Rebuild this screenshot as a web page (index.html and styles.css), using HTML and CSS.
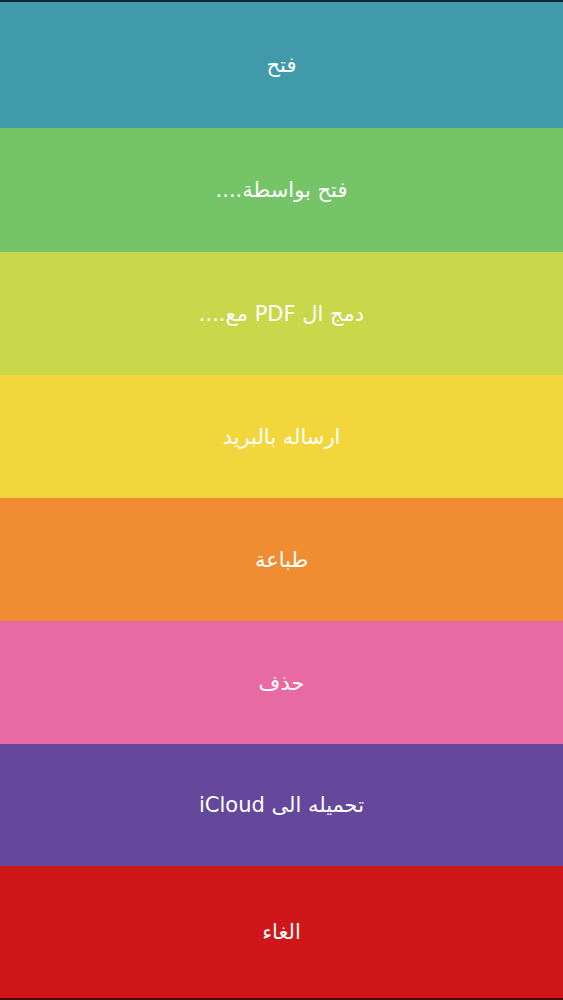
FILE: index.html
```html
<!doctype html>
<html lang="ar" dir="rtl">
    <head>
        <meta charset="UTF-8" />
        <meta name="viewport" content="width=device-width, initial-scale=1.0" />
        <title>خيارات الملف</title>
        <link rel="stylesheet" href="styles.css">
    </head>
    <body>
        <div class="menu">
            <div class="item open">فتح</div>
            <div class="item open-with">فتح بواسطة....</div>
            <div class="item merge">دمج ال PDF مع....</div>
            <div class="item mail">ارساله بالبريد</div>
            <div class="item print">طباعة</div>
            <div class="item delete">حذف</div>
            <div class="item icloud">تحميله الى iCloud</div>
            <div class="item cancel">الغاء</div>
        </div>
    </body>
</html>
```

FILE: styles.css
```css
html,
body {
    height: 100%;
    margin: 0;
    font-family: "DejaVu Sans", "Liberation Sans", sans-serif;
}
.menu {
    height: 1000px;
    box-sizing: border-box;
    border-top: 2px solid #0f2733;
    border-bottom: 2px solid #4a0a0a;
    display: grid;
    grid-template-rows: 126px 124px 123px 123px 123px 123px 122px 1fr;
}
.item {
    display: flex;
    align-items: center;
    justify-content: center;
    color: #fff;
    font-size: 21px;
}
.open {
    background: #419aa9;
}
.open-with {
    background: #76c468;
}
.merge {
    background: #c8d84a;
}
.mail {
    background: #f3d53c;
}
.print {
    background: #f08d33;
}
.delete {
    background: #e76aa2;
}
.icloud {
    background: #65479b;
}
.cancel {
    background: #cf1619;
}
```
